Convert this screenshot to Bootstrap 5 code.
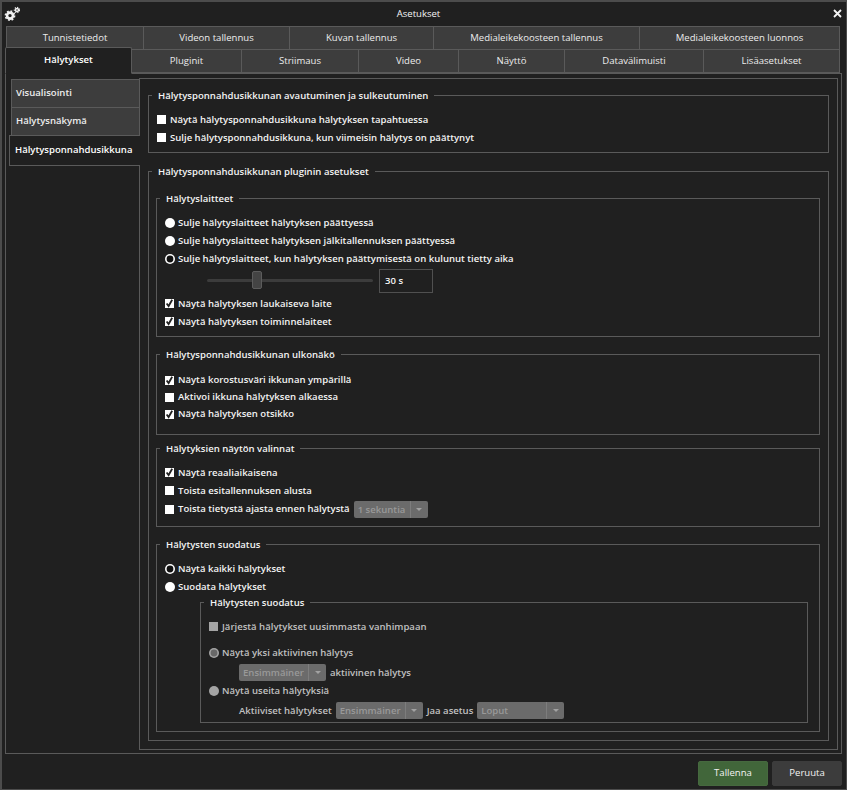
<!DOCTYPE html>
<html lang="fi">
<head>
  <meta charset="UTF-8">
  <title>Asetukset</title>
  <link href="https://cdn.jsdelivr.net/npm/bootstrap@5.3.0/dist/css/bootstrap.min.css" rel="stylesheet">
  <style>
    html, body { height: 790px; overflow: hidden; }
    body { background: #202020; color: #f4f4f4; font-family: "Open Sans", "Liberation Sans", sans-serif; font-size: 9.55px; font-weight: 600; line-height: 18px; }
    .app-frame { height: 790px; border: 1px solid #4c4c4c; border-width: 2px 1px 1px 2px; }
    .title-bar { height: 24px; padding: 0 4px 0 2px; font-weight: 400; }
    .title-text { flex: 1; text-align: center; padding-right: 16px; }
    .tab-row { display: flex; padding: 0; margin: 0; list-style: none; }
    .tab-row li { height: 24px; background: #3d3d3d; border: 1px solid #5a5a5a; border-left-width: 0; color: #ececec; font-weight: 400; display: flex; align-items: center; justify-content: center; }
    .tab-row li:first-child { border-left-width: 1px; }
    .tab-row-top { margin-left: 4px; width: 834px; }
    .tab-row-top li:nth-child(1) { width: 138px; }
    .tab-row-top li:nth-child(2) { width: 146px; }
    .tab-row-top li:nth-child(3) { width: 144px; }
    .tab-row-top li:nth-child(4) { width: 206px; }
    .tab-row-top li:nth-child(5) { width: 200px; }
    .tab-row-main { margin: -1px 0 0 3px; width: 835px; position: relative; z-index: 1; }
    .tab-row-main li:nth-child(1) { width: 127px; height: 27px; margin-top: -2px; background: #202020; border-color: #5a5a5a; border-bottom-color: #202020; border-radius: 2px 2px 0 0; color: #fff; font-weight: 600; }
    .tab-row-main li:nth-child(2) { width: 110px; }
    .tab-row-main li:nth-child(3) { width: 117px; }
    .tab-row-main li:nth-child(4) { width: 100px; }
    .tab-row-main li:nth-child(5) { width: 106px; }
    .tab-row-main li:nth-child(6) { width: 139px; }
    .tab-row-main li:nth-child(7) { width: 136px; }
    .tab-row-main li { align-self: flex-start; }
    .main-pane { margin: -1px 0 0 3px; width: 837px; height: 681px; border: 1px solid #5a5a5a; padding: 4px 3px 3px 3px; }
    .side-tabs { width: 130px; padding-top: 1px; flex: none; }
    .side-tab { display: flex; align-items: center; height: 28px; margin-left: 2px; padding-left: 4px; background: #3d3d3d; border: 1px solid #5a5a5a; border-right: 0; border-bottom: 0; color: #eee; }
    .side-tab-active { height: 31px; margin-left: 0; padding-left: 5px; background: #202020; border-bottom: 1px solid #5a5a5a; color: #fff; position: relative; margin-right: -1px; z-index: 1; }
    .content-pane { width: 699px; height: 672px; border: 1px solid #5a5a5a; padding: 8px 8px 0 8px; }
    fieldset.set-box { border: 1px solid #5a5a5a; padding: 0 8px; }
    fieldset.set-box > legend { float: none; width: auto; font-size: inherit; line-height: 18px; font-weight: 600; color: #f4f4f4; margin: 0 0 0 -5px; padding: 0 6px; }
    .box-outer { margin-top: 10px; height: 578px; }
    .box-first { height: 66px; }
    .box-devices { margin: 9px 0 0 -1px; height: 147px; }
    .box-look { margin: 9px 0 0 -1px; height: 89px; }
    .box-view { margin: 5px 0 0 -1px; height: 87px; }
    .box-filter { margin: 9px 0 0 -1px; height: 196px; }
    .box-inner { margin: -2px 3px 0 35px; height: 129px; }
    .box-inner > legend { color: #c8c8c8; }
    .pad-sm { margin-top: 6px; }
    .pad-md { margin-top: 8px; }
    .pad-xs { margin-top: 2px; }
    .opt-row { display: flex; align-items: center; height: 18px; gap: 4px; }
    .opt-short { height: 17px; }
    .opt-tall { height: 19px; }
    .opt-muted { color: #c0c0c0; }
    .form-check-input { width: 9px; height: 9px; margin: 0; flex: none; background-color: #fff; border: 0; opacity: 1 !important; }
    .form-check-input[type=checkbox] { border-radius: 0; }
    .form-check-input[type=radio] { width: 10px; height: 10px; margin-right: -1px; border-radius: 50%; }
    .form-check-input:checked { background-color: #fff; }
    .form-check-input:checked[type=checkbox] { --bs-form-check-bg-image: url("data:image/svg+xml,%3csvg xmlns='http://www.w3.org/2000/svg' viewBox='0 0 10 10'%3e%3cpath fill='none' stroke='%23222' stroke-width='2' d='M1.8 5l2.2 2.8L8 .8'/%3e%3c/svg%3e"); background-size: 100% 100%; }
    .form-check-input:checked[type=radio] { --bs-form-check-bg-image: url("data:image/svg+xml,%3csvg xmlns='http://www.w3.org/2000/svg' viewBox='0 0 10 10'%3e%3ccircle cx='5' cy='5' r='3.4' fill='%23111'/%3e%3c/svg%3e"); background-size: 100% 100%; }
    .form-check-input[type]:disabled { background-color: #a4a4a4; }
    .form-check-input:checked[type=radio]:disabled { --bs-form-check-bg-image: url("data:image/svg+xml,%3csvg xmlns='http://www.w3.org/2000/svg' viewBox='0 0 10 10'%3e%3ccircle cx='5' cy='5' r='3.4' fill='%23686868'/%3e%3c/svg%3e"); }
    .slider-row { height: 24px; margin: 1px 0 2px 42px; gap: 6px; }
    .slider-range { width: 166px; height: 18px; }
    .slider-range::-webkit-slider-runnable-track { height: 3px; background: #3c3c3c; border-radius: 2px; }
    .slider-range::-webkit-slider-thumb { -webkit-appearance: none; appearance: none; width: 10px; height: 18px; margin-top: -8px; background: #444; border: 1px solid #5c5c5c; border-radius: 2px; box-shadow: none; }
    .spin-box { width: 54px; height: 24px; border: 1px solid #505050; padding-left: 5px; display: flex; align-items: center; }
    .combo-box { display: inline-flex; height: 17px; background: #6b6b6b; border-radius: 2px; color: #999; flex: none; }
    .combo-text { flex: 1; padding-left: 4px; overflow: hidden; white-space: nowrap; line-height: 17px; }
    .combo-arrow { width: 18px; border-left: 1px solid #7d7d7d; display: flex; align-items: center; justify-content: center; flex: none; }
    .combo-arrow::after { content: ""; border: 3.5px solid transparent; border-top: 3.5px solid #a2a2a2; border-bottom: 0; }
    .combo-sm { width: 74px; }
    .combo-md { width: 87px; }
    .indent-row { padding-left: 30px; }
    .footer-bar { height: 36px; padding: 7px 4px 0 0; gap: 4px; }
    .act-btn { width: 70px; height: 25px; padding: 0; font-size: 9.55px; line-height: 1; font-weight: 400; border: 1px solid #3c3c3c; color: #f2f2f2; background: #3c3c3c; border-radius: 2px; }
    .act-btn-save { background: #41663a; border-color: #46693f; }
  </style>
</head>
<body>
<div class="app-frame d-flex flex-column">
  <div class="title-bar d-flex align-items-center">
    <svg width="16" height="16" viewBox="0 0 16 16" fill="none" stroke="#f0f0f0">
      <circle cx="6" cy="9.6" r="3" stroke-width="2.6"/>
      <circle cx="6" cy="9.6" r="4.6" stroke-width="1.6" stroke-dasharray="1.8 1.8"/>
      <circle cx="13" cy="4" r="1.5" stroke-width="1.5"/>
      <circle cx="13" cy="4" r="2.6" stroke-width="1.2" stroke-dasharray="1.2 1.2"/>
    </svg>
    <div class="title-text">Asetukset</div>
    <svg width="9" height="9" viewBox="0 0 9 9" stroke="#f4f4f4" stroke-width="1.8"><path d="M1 1l7 7M8 1l-7 7"/></svg>
  </div>
  <ul class="tab-row tab-row-top">
    <li>Tunnistetiedot</li>
    <li>Videon tallennus</li>
    <li>Kuvan tallennus</li>
    <li>Medialeikekoosteen tallennus</li>
    <li>Medialeikekoosteen luonnos</li>
  </ul>
  <ul class="tab-row tab-row-main">
    <li>Hälytykset</li>
    <li>Pluginit</li>
    <li>Striimaus</li>
    <li>Video</li>
    <li>Näyttö</li>
    <li>Datavälimuisti</li>
    <li>Lisäasetukset</li>
  </ul>
  <div class="main-pane d-flex">
    <div class="side-tabs">
      <div class="side-tab">Visualisointi</div>
      <div class="side-tab">Hälytysnäkymä</div>
      <div class="side-tab side-tab-active">Hälytysponnahdusikkuna</div>
    </div>
    <div class="content-pane">
      <fieldset class="set-box box-first">
        <legend>Hälytysponnahdusikkunan avautuminen ja sulkeutuminen</legend>
        <label class="opt-row pad-sm"><input class="form-check-input" type="checkbox">Näytä hälytysponnahdusikkuna hälytyksen tapahtuessa</label>
        <label class="opt-row"><input class="form-check-input" type="checkbox">Sulje hälytysponnahdusikkuna, kun viimeisin hälytys on päättynyt</label>
      </fieldset>
      <fieldset class="set-box box-outer">
        <legend>Hälytysponnahdusikkunan pluginin asetukset</legend>
        <fieldset class="set-box box-devices">
          <legend>Hälytyslaitteet</legend>
          <label class="opt-row pad-sm"><input class="form-check-input" type="radio" name="sulje">Sulje hälytyslaitteet hälytyksen päättyessä</label>
          <label class="opt-row"><input class="form-check-input" type="radio" name="sulje">Sulje hälytyslaitteet hälytyksen jälkitallennuksen päättyessä</label>
          <label class="opt-row"><input class="form-check-input" type="radio" name="sulje" checked>Sulje hälytyslaitteet, kun hälytyksen päättymisestä on kulunut tietty aika</label>
          <div class="opt-row slider-row">
            <input type="range" class="form-range slider-range" min="0" max="100" value="29" aria-label="Aika">
            <div class="spin-box">30 s</div>
          </div>
          <label class="opt-row"><input class="form-check-input" type="checkbox" checked>Näytä hälytyksen laukaiseva laite</label>
          <label class="opt-row"><input class="form-check-input" type="checkbox" checked>Näytä hälytyksen toiminnelaiteet</label>
        </fieldset>
        <fieldset class="set-box box-look">
          <legend>Hälytysponnahdusikkunan ulkonäkö</legend>
          <label class="opt-row opt-short pad-md"><input class="form-check-input" type="checkbox" checked>Näytä korostusväri ikkunan ympärillä</label>
          <label class="opt-row opt-short"><input class="form-check-input" type="checkbox">Aktivoi ikkuna hälytyksen alkaessa</label>
          <label class="opt-row opt-short"><input class="form-check-input" type="checkbox" checked>Näytä hälytyksen otsikko</label>
        </fieldset>
        <fieldset class="set-box box-view">
          <legend>Hälytyksien näytön valinnat</legend>
          <label class="opt-row pad-sm"><input class="form-check-input" type="checkbox" checked>Näytä reaaliaikaisena</label>
          <label class="opt-row"><input class="form-check-input" type="checkbox">Toista esitallennuksen alusta</label>
          <div class="opt-row opt-tall"><input class="form-check-input" type="checkbox" aria-label="Toista tietystä ajasta">Toista tietystä ajasta ennen hälytystä
            <span class="combo-box combo-sm"><span class="combo-text">1 sekuntia</span><span class="combo-arrow"></span></span>
          </div>
        </fieldset>
        <fieldset class="set-box box-filter">
          <legend>Hälytysten suodatus</legend>
          <label class="opt-row pad-sm"><input class="form-check-input" type="radio" name="suodata" checked>Näytä kaikki hälytykset</label>
          <label class="opt-row"><input class="form-check-input" type="radio" name="suodata">Suodata hälytykset</label>
          <fieldset class="set-box box-inner">
            <legend>Hälytysten suodatus</legend>
            <label class="opt-row opt-muted pad-sm"><input class="form-check-input" type="checkbox" disabled>Järjestä hälytykset uusimmasta vanhimpaan</label>
            <label class="opt-row opt-muted mt-2"><input class="form-check-input" type="radio" name="maara" checked disabled>Näytä yksi aktiivinen hälytys</label>
            <div class="opt-row opt-muted indent-row pad-xs">
              <span class="combo-box combo-md"><span class="combo-text">Ensimmäiner</span><span class="combo-arrow"></span></span>
              aktiivinen hälytys
            </div>
            <label class="opt-row opt-muted"><input class="form-check-input" type="radio" name="maara" disabled>Näytä useita hälytyksiä</label>
            <div class="opt-row opt-muted indent-row pad-xs">
              Aktiiviset hälytykset
              <span class="combo-box combo-md"><span class="combo-text">Ensimmäiner</span><span class="combo-arrow"></span></span>
              Jaa asetus
              <span class="combo-box combo-md"><span class="combo-text">Loput</span><span class="combo-arrow"></span></span>
            </div>
          </fieldset>
        </fieldset>
      </fieldset>
    </div>
  </div>
  <div class="footer-bar d-flex justify-content-end">
    <button type="button" class="btn act-btn act-btn-save">Tallenna</button>
    <button type="button" class="btn act-btn">Peruuta</button>
  </div>
</div>
<script src="https://cdn.jsdelivr.net/npm/bootstrap@5.3.0/dist/js/bootstrap.bundle.min.js"></script>
</body>
</html>
